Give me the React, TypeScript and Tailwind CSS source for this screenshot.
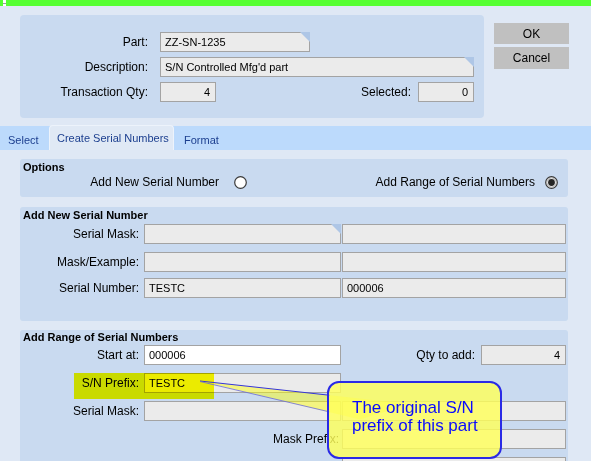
import React from "react";

function Corner() {
  return (
    <svg className="absolute -right-px -top-px" width="10" height="10" viewBox="0 0 10 10">
      <polygon points="0,0 10,0 10,10" fill="#aec6e6" />
    </svg>
  );
}

function Box({
  className,
  children,
  corner,
}: {
  className: string;
  children?: React.ReactNode;
  corner?: boolean;
}) {
  return (
    <div
      className={
        "relative h-[20px] border border-[#a3a3a3] flex items-center text-[11px] text-black whitespace-nowrap " +
        className
      }
    >
      {children}
      {corner && <Corner />}
    </div>
  );
}

function Radio({ checked }: { checked?: boolean }) {
  return (
    <svg width="13" height="13" viewBox="0 0 13 13">
      <circle cx="6.5" cy="6.5" r="5.8" fill="#ffffff" stroke="#3a3a3a" strokeWidth="1.2" />
      {checked && <circle cx="6.5" cy="6.5" r="4.6" fill="none" stroke="#9a9a9a" strokeWidth="0.8" />}
      {checked && <circle cx="6.5" cy="6.5" r="3.4" fill="#262626" />}
    </svg>
  );
}

export default function App() {
  return (
    <div className="relative w-[591px] h-[461px] overflow-hidden bg-[#dfe8f5] font-['Liberation_Sans','Arial',sans-serif] text-black">
      {/* green title strip */}
      <div className="relative h-[6px] bg-[#55ff33]">
        <div className="absolute left-[3px] top-0 w-[3px] h-[6px] bg-white flex flex-col justify-center">
          <div className="h-px bg-[#9a9a9a]" />
        </div>
      </div>

      {/* top section */}
      <div className="flex pl-[20px] mt-[9px]">
        <div className="w-[464px] h-[103px] bg-[#c9daf0] rounded-[4px] pt-[17px] pr-[10px] flex flex-col gap-[5px]">
          <div className="flex items-center h-[20px]">
            <div className="w-[128px] text-right text-[12px]">Part:</div>
            <Box className="ml-[12px] w-[150px] bg-[#ebebeb] pl-[4px]" corner>
              ZZ-SN-1235
            </Box>
          </div>
          <div className="flex items-center h-[20px]">
            <div className="w-[128px] text-right text-[12px]">Description:</div>
            <Box className="ml-[12px] w-[314px] bg-[#ebebeb] pl-[4px]" corner>
              S/N Controlled Mfg'd part
            </Box>
          </div>
          <div className="flex items-center h-[20px]">
            <div className="w-[128px] text-right text-[12px]">Transaction Qty:</div>
            <Box className="ml-[12px] w-[56px] bg-[#ebebeb] justify-end pr-[5px]">4</Box>
            <div className="flex-1" />
            <div className="text-[12px]">Selected:</div>
            <Box className="ml-[7px] w-[56px] bg-[#ebebeb] justify-end pr-[5px]">0</Box>
          </div>
        </div>
        <div className="ml-[10px] mt-[8px] flex flex-col gap-[3px] w-[75px]">
          <div className="h-[21px] bg-[#c0c0c0] text-[12px] flex items-center justify-center">OK</div>
          <div className="h-[22px] bg-[#c0c0c0] text-[12px] flex items-center justify-center">Cancel</div>
        </div>
      </div>

      {/* tabs */}
      <div className="mt-[8px] h-[24px] bg-[#bcdafc] flex text-[11px] text-[#1c3f8f]">
        <div className="w-[49px] pl-[8px] flex items-center pt-[4px]">Select</div>
        <div className="w-[125px] h-[25px] -mt-[1px] bg-[#e0e9f5] rounded-t-[4px] border-t border-l border-r border-[#edf3fb] pl-[7px] flex items-center whitespace-nowrap">
          Create Serial Numbers
        </div>
        <div className="pl-[10px] flex items-center pt-[4px]">Format</div>
      </div>

      <div className="pt-[9px] pl-[20px]">
        {/* Options */}
        <div className="w-[548px] h-[38px] rounded-[3px] bg-[#c9daf0] pt-[2px]">
          <div className="h-[13px] leading-[13px] text-[11px] font-bold pl-[3px]">Options</div>
          <div className="h-[16px] flex items-center justify-between pr-[10px] text-[12px]">
            <div className="w-[227px] flex justify-end items-center gap-[15px]">
              <span>Add New Serial Number</span>
              <Radio />
            </div>
            <div className="flex items-center gap-[10px]">
              <span>Add Range of Serial Numbers</span>
              <Radio checked />
            </div>
          </div>
        </div>

        {/* Add New Serial Number */}
        <div className="mt-[10px] w-[548px] h-[114px] rounded-[3px] bg-[#c9daf0] pt-[2px]">
          <div className="h-[13px] leading-[13px] text-[11px] font-bold pl-[3px]">Add New Serial Number</div>
          <div className="mt-[2px] flex items-center">
            <div className="w-[119px] text-right text-[12px]">Serial Mask:</div>
            <Box className="ml-[5px] w-[197px] bg-[#ebebeb]" corner />
            <Box className="ml-[1px] w-[224px] bg-[#ebebeb]" />
          </div>
          <div className="mt-[8px] flex items-center">
            <div className="w-[119px] text-right text-[12px]">Mask/Example:</div>
            <Box className="ml-[5px] w-[197px] bg-[#ebebeb]" />
            <Box className="ml-[1px] w-[224px] bg-[#ebebeb]" />
          </div>
          <div className="mt-[6px] flex items-center">
            <div className="w-[119px] text-right text-[12px]">Serial Number:</div>
            <Box className="ml-[5px] w-[197px] bg-[#ebebeb] pl-[4px]">TESTC</Box>
            <Box className="ml-[1px] w-[224px] bg-[#ebebeb] pl-[4px]">000006</Box>
          </div>
        </div>

        {/* Add Range of Serial Numbers */}
        <div className="mt-[9px] w-[548px] h-[140px] rounded-[3px] bg-[#c9daf0] pt-[1px]">
          <div className="h-[13px] leading-[13px] text-[11px] font-bold pl-[3px]">Add Range of Serial Numbers</div>
          <div className="mt-[1px] flex items-center">
            <div className="w-[119px] text-right text-[12px]">Start at:</div>
            <Box className="ml-[5px] w-[197px] bg-white pl-[4px]">000006</Box>
            <div className="flex-1" />
            <div className="text-[12px]">Qty to add:</div>
            <Box className="ml-[6px] w-[85px] bg-[#ebebeb] justify-end pr-[5px] mr-[2px]">4</Box>
          </div>
          <div className="mt-[8px] flex items-center">
            <div className="w-[119px] text-right text-[12px]">S/N Prefix:</div>
            <Box className="ml-[5px] w-[197px] bg-[#ebebeb] pl-[4px]">TESTC</Box>
          </div>
          <div className="mt-[8px] flex items-center">
            <div className="w-[119px] text-right text-[12px]">Serial Mask:</div>
            <Box className="ml-[5px] w-[197px] bg-[#ebebeb]" />
            <Box className="ml-[1px] w-[224px] bg-[#ebebeb]" />
          </div>
          <div className="mt-[8px] flex items-center">
            <div className="w-[319px] text-right text-[12px]">Mask Prefix:</div>
            <Box className="ml-[3px] w-[224px] bg-[#ebebeb]" />
          </div>
          <div className="mt-[8px] flex items-center">
            <div className="w-[319px]" />
            <Box className="ml-[3px] w-[224px] bg-[#ebebeb]" />
          </div>
        </div>
      </div>

      {/* highlight on S/N Prefix */}
      <div className="absolute left-[74px] top-[373px] w-[140px] h-[26px] bg-[#ffff00] mix-blend-multiply pointer-events-none" />

      {/* callout pointer */}
      <svg className="absolute left-0 top-0 pointer-events-none" width="591" height="461" viewBox="0 0 591 461">
        <polygon points="200,381 410,404 360,419.5" fill="rgba(255,255,0,0.45)" />
        <line x1="200" y1="381" x2="330" y2="395.3" stroke="#3535d8" strokeWidth="1" />
        <line x1="200" y1="381.5" x2="330" y2="412" stroke="#6a6ad8" strokeWidth="0.8" />
      </svg>

      {/* callout bubble */}
      <div className="absolute left-[327px] top-[381px] w-[175px] h-[78px] rounded-[12px] border-2 border-[#2a2ae6] bg-[rgba(255,255,90,0.82)] pl-[23px] pt-[16px] text-[17px] leading-[18px] text-[#0a0aff] whitespace-nowrap">
        <div>The original S/N</div>
        <div>prefix of this part</div>
      </div>
    </div>
  );
}
